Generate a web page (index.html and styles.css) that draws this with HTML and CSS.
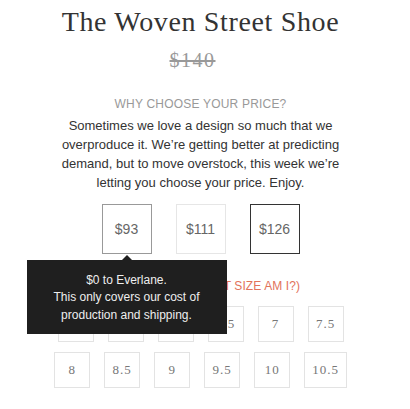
FILE: index.html
```html
<!DOCTYPE html>
<html lang="en">
<head>
<meta charset="utf-8">
<title>The Woven Street Shoe</title>
<link rel="stylesheet" href="styles.css">
</head>
<body>
<main class="page">
  <h1 class="title">The Woven Street Shoe</h1>
  <div class="old-price">$140</div>
  <h2 class="why">WHY CHOOSE YOUR PRICE?</h2>
  <p class="blurb">Sometimes we love a design so much that we overproduce it. We’re getting better at predicting demand, but to move overstock, this week we’re letting you choose your price. Enjoy.</p>
  <div class="prices">
    <div class="price price-low">$93
      <div class="tooltip">
        <span class="tooltip-arrow"></span>
        $0 to Everlane.<br>This only covers our cost of<br>production and shipping.
      </div>
    </div>
    <div class="price">$111</div>
    <div class="price price-selected">$126</div>
  </div>
  <div class="size-label">SELECT A SIZE <span class="size-link">(WHAT SIZE AM I?)</span></div>
  <div class="sizes">
    <div class="size">5</div>
    <div class="size">5.5</div>
    <div class="size">6</div>
    <div class="size">6.5</div>
    <div class="size">7</div>
    <div class="size">7.5</div>
  </div>
  <div class="sizes">
    <div class="size">8</div>
    <div class="size">8.5</div>
    <div class="size">9</div>
    <div class="size">9.5</div>
    <div class="size">10</div>
    <div class="size">10.5</div>
  </div>
</main>
</body>
</html>
```

FILE: styles.css
```css
html, body {
  margin: 0;
  padding: 0;
  background: #ffffff;
}

.page {
  width: 401px;
  display: flex;
  flex-direction: column;
  align-items: center;
  font-family: "Liberation Sans", Arial, sans-serif;
  color: #333333;
}

.title {
  margin: 6px 0 0;
  font-family: "Liberation Serif", "Times New Roman", serif;
  font-weight: normal;
  font-size: 28px;
  letter-spacing: 0.65px;
  line-height: 32px;
  color: #333333;
}

.old-price {
  margin: 10px 16px 0 0;
  font-family: "Liberation Serif", "Times New Roman", serif;
  font-size: 20px;
  letter-spacing: 1.5px;
  line-height: 24px;
  color: #999999;
  text-decoration: line-through;
}

.why {
  margin: 24px 0 0;
  font-weight: normal;
  font-size: 12px;
  letter-spacing: 0.2px;
  line-height: 16px;
  color: #999999;
}

.blurb {
  margin: 4px 0 0;
  width: 280px;
  font-size: 13px;
  line-height: 19px;
  text-align: center;
  color: #333333;
}

.prices {
  margin-top: 12px;
  display: flex;
  gap: 24px;
}

.price {
  position: relative;
  box-sizing: border-box;
  width: 50px;
  height: 50px;
  display: flex;
  align-items: center;
  justify-content: center;
  border: 1px solid #e6e6e6;
  font-size: 14px;
  color: #666666;
}

.price-low {
  border-color: #999999;
}

.price-selected {
  border-color: #333333;
}

.tooltip {
  position: absolute;
  top: 55px;
  left: 50%;
  margin-left: -100px;
  width: 200px;
  height: 74px;
  box-sizing: border-box;
  padding-top: 11.5px;
  background: #1f1f1f;
  color: #eeeeee;
  font-size: 12px;
  line-height: 17.5px;
  text-align: center;
  z-index: 5;
}

.tooltip-arrow {
  position: absolute;
  top: -5px;
  left: 50%;
  margin-left: -5px;
  width: 0;
  height: 0;
  border-left: 5px solid transparent;
  border-right: 5px solid transparent;
  border-bottom: 5px solid #1f1f1f;
}

.size-label {
  margin-top: 24px;
  font-size: 12px;
  letter-spacing: 0.1px;
  line-height: 16px;
  color: #333333;
}

.size-link {
  color: #e2725b;
}

.sizes {
  margin-top: 12px;
  display: flex;
  gap: 14px;
}

.sizes + .sizes {
  margin-top: 10px;
}

.size {
  box-sizing: border-box;
  min-width: 36px;
  height: 36px;
  padding: 0 7px;
  display: flex;
  align-items: center;
  justify-content: center;
  border: 1px solid #e3e3e3;
  font-family: "Liberation Serif", "Times New Roman", serif;
  font-size: 13px;
  letter-spacing: 1px;
  color: #777777;
}
```
